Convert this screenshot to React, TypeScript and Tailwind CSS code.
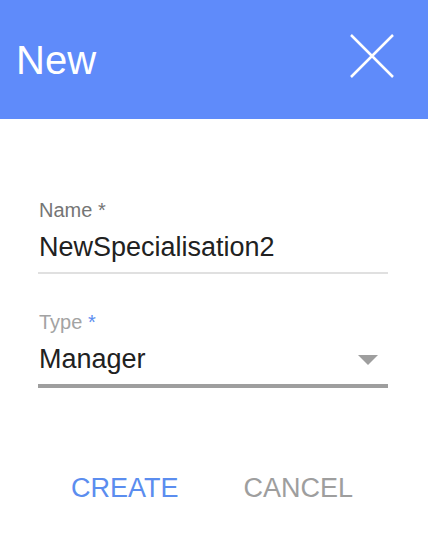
import React from "react";

export default function App() {
  return (
    <div className="w-[428px] h-[546px] bg-white font-['Liberation_Sans',Arial,sans-serif]">
      <header className="h-[119px] bg-[#5f8bfa] flex items-center justify-between pl-4 pr-[34px]">
        <h1 className="text-[40px] leading-[48px] text-white font-normal">New</h1>
        <svg width="44" height="44" viewBox="0 0 44 44" className="mt-[-7px]">
          <path d="M1 1 L43 43 M43 1 L1 43" stroke="white" strokeWidth="2.5" fill="none" />
        </svg>
      </header>
      <div className="pl-[38px] pr-[40px] pt-[81px]">
        <div className="flex flex-col">
          <div className="text-[20px] leading-[20px] text-[#757575] pl-[1px]">Name *</div>
          <div className="mt-[11px] text-[27px] leading-[32px] text-[#212121] pl-[1px] pb-[9px] border-b-2 border-[#e0e0e0]">
            NewSpecialisation2
          </div>
        </div>
        <div className="flex flex-col mt-[38px]">
          <div className="text-[20px] leading-[20px] text-[#a3a3a3] pl-[1px]">
            Type <span className="text-[#5b8def]">*</span>
          </div>
          <div className="mt-[11px] flex items-center justify-between pb-[9px] border-b-4 border-[#9e9e9e]">
            <span className="text-[27px] leading-[32px] text-[#212121] pl-[1px]">Manager</span>
            <svg width="20" height="10" viewBox="0 0 20 10" className="mr-[10px] mt-[2px]">
              <path d="M0 0 L20 0 L10 10 Z" fill="#9e9e9e" />
            </svg>
          </div>
        </div>
      </div>
      <div className="flex pl-[71px] gap-[65px] mt-[84px]">
        <span className="text-[27px] leading-[32px] text-[#5b8def]">CREATE</span>
        <span className="text-[27px] leading-[32px] text-[#9e9e9e]">CANCEL</span>
      </div>
    </div>
  );
}
